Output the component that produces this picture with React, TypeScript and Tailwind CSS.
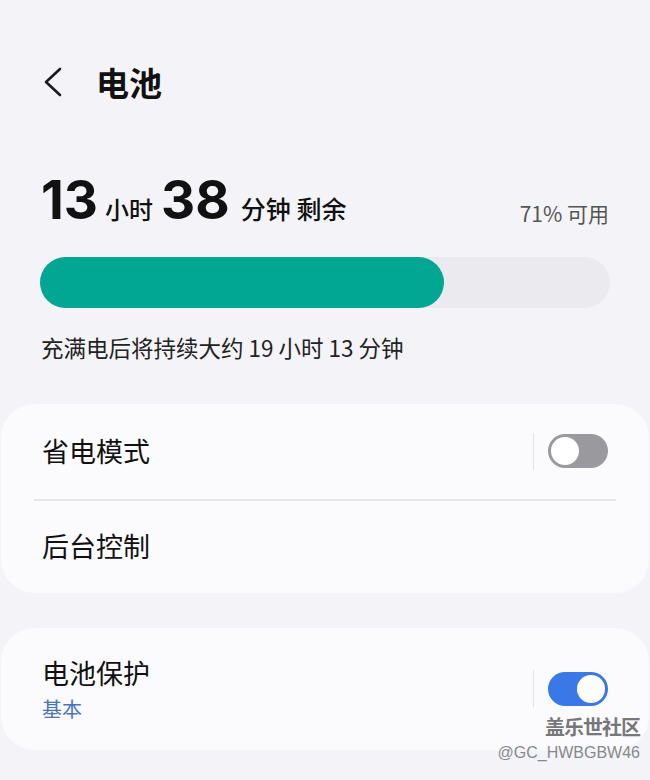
import React from "react";

const cjk = { fontFamily: '"Noto Sans CJK SC", "Noto Sans", sans-serif' };
const num = { fontFamily: 'Inter, "Noto Sans CJK SC", sans-serif' };

function Toggle({ on }: { on: boolean }) {
  return (
    <div className="flex items-center">
      <div className="w-px h-[37px] bg-[#e2e2e6] mr-[14px]" />
      <div
        className={
          "w-[60px] h-[34px] rounded-full flex items-center px-[3px] " +
          (on ? "bg-[#3a78e8] justify-end" : "bg-[#9a9a9e] justify-start")
        }
      >
        <div className="w-[28px] h-[28px] rounded-full bg-white" />
      </div>
    </div>
  );
}

export default function App() {
  return (
    <div className="w-[650px] h-[780px] bg-[#f4f4f8] relative overflow-hidden" style={cjk}>
      {/* Header */}
      <div className="flex items-center h-[40px] mt-[62px] pl-[40px]">
        <svg width="26" height="32" viewBox="0 0 26 32" className="mr-[30px]">
          <path d="M20 3 L6 16 L20 29" fill="none" stroke="#1a1a1a" strokeWidth="2.6" strokeLinecap="round" strokeLinejoin="round" />
        </svg>
        <div className="text-[33px] font-bold text-[#111] leading-none">电池</div>
      </div>

      {/* Remaining time */}
      <div className="flex items-end justify-between px-[41px] mt-[72px]">
        <div className="flex items-baseline text-[#111]">
          <span className="text-[53px] font-bold leading-none" style={num}>13</span>
          <span className="text-[24px] font-medium ml-[7px] mr-[8px]">小时</span>
          <span className="text-[53px] font-bold leading-none" style={num}>38</span>
          <span className="text-[25px] font-medium ml-[11px]">分钟 剩余</span>
        </div>
        <div className="text-[21px] text-[#555] mb-[-2px]">71% 可用</div>
      </div>

      {/* Bar */}
      <div className="mx-[40px] mt-[29px] h-[51px] rounded-full bg-[#ebebef]">
        <div className="h-full rounded-full bg-[#02a793]" style={{ width: "404px" }} />
      </div>

      <div className="px-[41px] mt-[24px] text-[22.5px] text-[#222] leading-[30px]">
        充满电后将持续大约 19 小时 13 分钟
      </div>

      {/* Card 1 */}
      <div className="mx-[1px] mt-[42px] rounded-[34px] bg-[#fbfbfe]">
        <div className="flex items-center justify-between h-[95px] pl-[41px] pr-[41px]">
          <div className="text-[27px] text-[#111]">省电模式</div>
          <Toggle on={false} />
        </div>
        <div className="mx-[33px] h-[2px] bg-[#e6e6ea]" />
        <div className="flex items-center h-[92px] pl-[41px]">
          <div className="text-[27px] text-[#111]">后台控制</div>
        </div>
      </div>

      {/* Card 2 */}
      <div className="mx-[1px] mt-[35px] rounded-[34px] bg-[#fbfbfe] h-[122px] flex items-center justify-between pl-[41px] pr-[41px]">
        <div className="flex flex-col">
          <div className="text-[27px] text-[#111] leading-[34px]">电池保护</div>
          <div className="text-[20px] text-[#4a76b8] leading-[26px] mt-[6px]">基本</div>
        </div>
        <Toggle on={true} />
      </div>

      {/* Watermark */}
      <div className="absolute right-[10px] top-[714px] flex flex-col items-end">
        <div className="text-[20px] font-bold text-[#77777a] leading-[26px] tracking-[-1px]">盖乐世社区</div>
        <div className="text-[16px] text-[#88888b] leading-[24px] mt-[1px]" style={{ fontFamily: '"Liberation Sans", sans-serif' }}>@GC_HWBGBW46</div>
      </div>
    </div>
  );
}
